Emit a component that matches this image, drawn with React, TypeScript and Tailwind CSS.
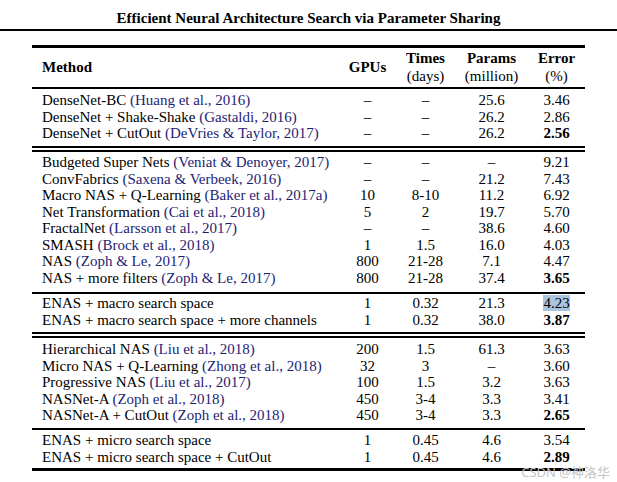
import React from 'react';

type Row = {
  method: string;
  cite?: string;
  gpus: string;
  times: string;
  params: string;
  error: string;
  best?: boolean;
  marked?: boolean;
};

type Section = { rows: Row[]; pad: string; rule: 'single' | 'double' | 'bottom' };

const D = '–';

const sections: Section[] = [
  {
    pad: 'pt-[3px] pb-[4.5px]',
    rule: 'double',
    rows: [
      { method: 'DenseNet-BC', cite: '(Huang et al., 2016)', gpus: D, times: D, params: '25.6', error: '3.46' },
      { method: 'DenseNet + Shake-Shake', cite: '(Gastaldi, 2016)', gpus: D, times: D, params: '26.2', error: '2.86' },
      { method: 'DenseNet + CutOut', cite: '(DeVries & Taylor, 2017)', gpus: D, times: D, params: '26.2', error: '2.56', best: true },
    ],
  },
  {
    pad: 'pt-[2px] pb-[6px]',
    rule: 'single',
    rows: [
      { method: 'Budgeted Super Nets', cite: '(Veniat & Denoyer, 2017)', gpus: D, times: D, params: D, error: '9.21' },
      { method: 'ConvFabrics', cite: '(Saxena & Verbeek, 2016)', gpus: D, times: D, params: '21.2', error: '7.43' },
      { method: 'Macro NAS + Q-Learning', cite: '(Baker et al., 2017a)', gpus: '10', times: '8-10', params: '11.2', error: '6.92' },
      { method: 'Net Transformation', cite: '(Cai et al., 2018)', gpus: '5', times: '2', params: '19.7', error: '5.70' },
      { method: 'FractalNet', cite: '(Larsson et al., 2017)', gpus: D, times: D, params: '38.6', error: '4.60' },
      { method: 'SMASH', cite: '(Brock et al., 2018)', gpus: '1', times: '1.5', params: '16.0', error: '4.03' },
      { method: 'NAS', cite: '(Zoph & Le, 2017)', gpus: '800', times: '21-28', params: '7.1', error: '4.47' },
      { method: 'NAS + more filters', cite: '(Zoph & Le, 2017)', gpus: '800', times: '21-28', params: '37.4', error: '3.65', best: true },
    ],
  },
  {
    pad: 'pt-[1px] pb-[4px]',
    rule: 'double',
    rows: [
      { method: 'ENAS + macro search space', gpus: '1', times: '0.32', params: '21.3', error: '4.23', marked: true },
      { method: 'ENAS + macro search space + more channels', gpus: '1', times: '0.32', params: '38.0', error: '3.87', best: true },
    ],
  },
  {
    pad: 'pt-[3px] pb-[4.5px]',
    rule: 'single',
    rows: [
      { method: 'Hierarchical NAS', cite: '(Liu et al., 2018)', gpus: '200', times: '1.5', params: '61.3', error: '3.63' },
      { method: 'Micro NAS + Q-Learning', cite: '(Zhong et al., 2018)', gpus: '32', times: '3', params: D, error: '3.60' },
      { method: 'Progressive NAS', cite: '(Liu et al., 2017)', gpus: '100', times: '1.5', params: '3.2', error: '3.63' },
      { method: 'NASNet-A', cite: '(Zoph et al., 2018)', gpus: '450', times: '3-4', params: '3.3', error: '3.41' },
      { method: 'NASNet-A + CutOut', cite: '(Zoph et al., 2018)', gpus: '450', times: '3-4', params: '3.3', error: '2.65', best: true },
    ],
  },
  {
    pad: 'pt-[2px] pb-[3px]',
    rule: 'bottom',
    rows: [
      { method: 'ENAS + micro search space', gpus: '1', times: '0.45', params: '4.6', error: '3.54' },
      { method: 'ENAS + micro search space + CutOut', gpus: '1', times: '0.45', params: '4.6', error: '2.89', best: true },
    ],
  },
];

const cols = 'grid grid-cols-[307px_57px_59px_73px_57px]';

const Rule: React.FC<{ kind: Section['rule'] }> = ({ kind }) => {
  if (kind === 'double')
    return (
      <div>
        <div className="border-t-2 border-black" />
        <div className="mt-[2px] border-t-2 border-black" />
      </div>
    );
  if (kind === 'bottom') return <div className="border-t-[3px] border-black" />;
  return <div className="border-t-2 border-black" />;
};

export default function App() {
  return (
    <div
      className="relative h-[482px] w-[617px] overflow-hidden bg-white text-black"
      style={{ fontFamily: '"Liberation Serif", "Times New Roman", serif' }}
    >
      <div className="pt-[8px] text-center text-[15px] font-bold leading-[20px]">
        Efficient Neural Architecture Search via Parameter Sharing
      </div>
      <div className="mt-[1px] border-t-2 border-black" />

      <div className="ml-[32px] mt-[14px] w-[553px] text-[15px]">
        <div className="border-t-[3px] border-black" />

        {/* header */}
        <div className={`${cols} pt-[1px] pb-[2px] leading-[18px]`}>
          <div className="flex items-center pl-[10px] font-bold">Method</div>
          <div className="flex items-center justify-center font-bold">GPUs</div>
          <div className="text-center">
            <div className="font-bold">Times</div>
            <div>(days)</div>
          </div>
          <div className="text-center">
            <div className="font-bold">Params</div>
            <div>(million)</div>
          </div>
          <div className="text-center">
            <div className="font-bold">Error</div>
            <div>(%)</div>
          </div>
        </div>
        <div className="border-t-2 border-black" />

        {sections.map((s, i) => (
          <div key={i}>
            <div className={`${s.pad} leading-[16.5px]`}>
              {s.rows.map((r) => (
                <div key={r.method + r.error} className={cols}>
                  <div className="whitespace-nowrap pl-[10px]">
                    {r.method}
                    {r.cite && <span className="text-[#1e1e74]"> {r.cite}</span>}
                  </div>
                  <div className="text-center">{r.gpus}</div>
                  <div className="text-center">{r.times}</div>
                  <div className="text-center">{r.params}</div>
                  <div className="text-center">
                    <span className={`${r.best ? 'font-bold' : ''} ${r.marked ? 'bg-[#a8c4de]' : ''}`}>
                      {r.error}
                    </span>
                  </div>
                </div>
              ))}
            </div>
            <Rule kind={s.rule} />
          </div>
        ))}
      </div>

      <div
        className="absolute right-[7px] top-[463px] text-[13px] leading-[18px] text-[#c4c4c4]"
        style={{ fontFamily: '"Noto Sans", "Noto Sans CJK SC", sans-serif' }}
      >
        CSDN @神洛华
      </div>
    </div>
  );
}
